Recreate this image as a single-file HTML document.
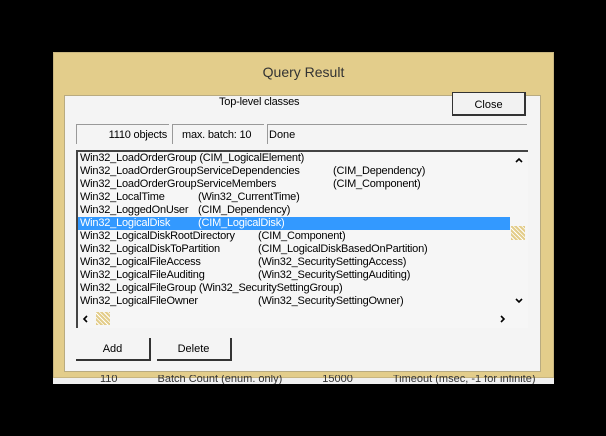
<!DOCTYPE html><html><head><style>
body{margin:0;width:606px;height:436px;background:#000;position:relative;overflow:hidden;font-family:"Liberation Sans",sans-serif;font-size:11px;color:#000}
.a{position:absolute}
.row{position:absolute;left:80px;height:13px;line-height:13px;white-space:nowrap;letter-spacing:-0.2px;top:0}
.row span{position:absolute}
</style></head><body>
<div class="a" style="left:53px;top:52px;width:501px;height:326px;background:#e3cd8b;border:1px solid #c9b680;box-sizing:border-box"></div>
<div class="a" style="left:53px;top:378px;width:501px;height:6px;background:#f0f0f0"></div>
<div class="a" style="left:53px;top:64px;width:501px;text-align:center;font-size:14px;color:#333">Query Result</div>
<div class="a" style="left:64px;top:95px;width:477px;height:277px;background:#f4f4f4;border:1px solid #b9ab80;box-sizing:border-box"></div>
<div class="a" style="left:219px;top:96px;font-size:11px;letter-spacing:-0.2px">Top-level classes</div>
<div class="a" style="left:452px;top:92px;width:74px;height:24px;border:1px solid #333;border-right:2px solid #333;border-bottom:2px solid #333;box-sizing:border-box;background:#f2f2f2;text-align:center;line-height:24px">Close</div>
<div class="a" style="left:76px;top:124px;width:93px;height:20px;border-left:1px solid #999;border-top:1px solid #999;box-sizing:border-box;text-align:right;padding-right:2px;line-height:20px;letter-spacing:-0.2px">1110 objects</div>
<div class="a" style="left:172px;top:124px;width:92px;height:20px;border-left:1px solid #999;border-top:1px solid #999;box-sizing:border-box;padding-left:9px;line-height:20px;letter-spacing:-0.2px">max. batch: 10</div>
<div class="a" style="left:267px;top:124px;width:260px;height:20px;border-left:1px solid #999;border-top:1px solid #999;box-sizing:border-box;padding-left:1px;line-height:20px">Done</div>
<div class="a" style="left:76px;top:150px;width:452px;height:178px;background:#f6f6f6;border-left:2px solid #444;border-top:2px solid #444;box-sizing:border-box"></div>
<div class="a" style="left:78px;top:217px;width:432px;height:13px;background:#3399ff"></div>
<div class="a" style="left:511px;top:226px;width:14px;height:14px;background:repeating-linear-gradient(45deg,#e3cd8b 0 2px,#fff 2px 3px)"></div>
<div class="a" style="left:96px;top:312px;width:14px;height:13px;background:repeating-linear-gradient(45deg,#e3cd8b 0 2px,#fff 2px 3px)"></div>
<svg class="a" style="left:514px;top:156px" width="10" height="8"><path d="M2 6 L5 3 L8 6" stroke="#000" stroke-width="1.6" fill="none"/></svg>
<svg class="a" style="left:514px;top:297px" width="10" height="8"><path d="M2 2 L5 5 L8 2" stroke="#000" stroke-width="1.6" fill="none"/></svg>
<svg class="a" style="left:81px;top:314px" width="8" height="10"><path d="M6 2 L3 5 L6 8" stroke="#000" stroke-width="1.6" fill="none"/></svg>
<svg class="a" style="left:499px;top:314px" width="8" height="10"><path d="M2 2 L5 5 L2 8" stroke="#000" stroke-width="1.6" fill="none"/></svg>
<div class="a" style="left:0;top:152px">
<div class="row" style="top:0px">Win32_LoadOrderGroup (CIM_LogicalElement)</div>
<div class="row" style="top:13px">Win32_LoadOrderGroupServiceDependencies<span style="left:253px">(CIM_Dependency)</span></div>
<div class="row" style="top:26px">Win32_LoadOrderGroupServiceMembers<span style="left:253px">(CIM_Component)</span></div>
<div class="row" style="top:39px">Win32_LocalTime<span style="left:118px">(Win32_CurrentTime)</span></div>
<div class="row" style="top:52px">Win32_LoggedOnUser<span style="left:118px">(CIM_Dependency)</span></div>
<div class="row" style="top:65px;color:#fff">Win32_LogicalDisk<span style="left:118px">(CIM_LogicalDisk)</span></div>
<div class="row" style="top:78px">Win32_LogicalDiskRootDirectory<span style="left:178px">(CIM_Component)</span></div>
<div class="row" style="top:91px">Win32_LogicalDiskToPartition<span style="left:178px">(CIM_LogicalDiskBasedOnPartition)</span></div>
<div class="row" style="top:104px">Win32_LogicalFileAccess<span style="left:178px">(Win32_SecuritySettingAccess)</span></div>
<div class="row" style="top:117px">Win32_LogicalFileAuditing<span style="left:178px">(Win32_SecuritySettingAuditing)</span></div>
<div class="row" style="top:130px">Win32_LogicalFileGroup (Win32_SecuritySettingGroup)</div>
<div class="row" style="top:143px">Win32_LogicalFileOwner<span style="left:178px">(Win32_SecuritySettingOwner)</span></div>
</div>
<div class="a" style="left:76px;top:338px;width:75px;height:23px;border-right:2px solid #333;border-bottom:2px solid #333;box-sizing:border-box;text-align:center;line-height:22px">Add</div>
<div class="a" style="left:157px;top:338px;width:75px;height:23px;border-right:2px solid #333;border-bottom:2px solid #333;box-sizing:border-box;text-align:center;line-height:22px">Delete</div>
<div class="a" style="left:100px;top:375px;font-size:11px;color:#333;line-height:9px;height:9px;overflow:hidden;white-space:nowrap">110<span style="margin-left:40px">Batch Count (enum. only)</span><span style="margin-left:40px">15000</span><span style="margin-left:40px">Timeout (msec, -1 for infinite)</span></div>
</body></html>
